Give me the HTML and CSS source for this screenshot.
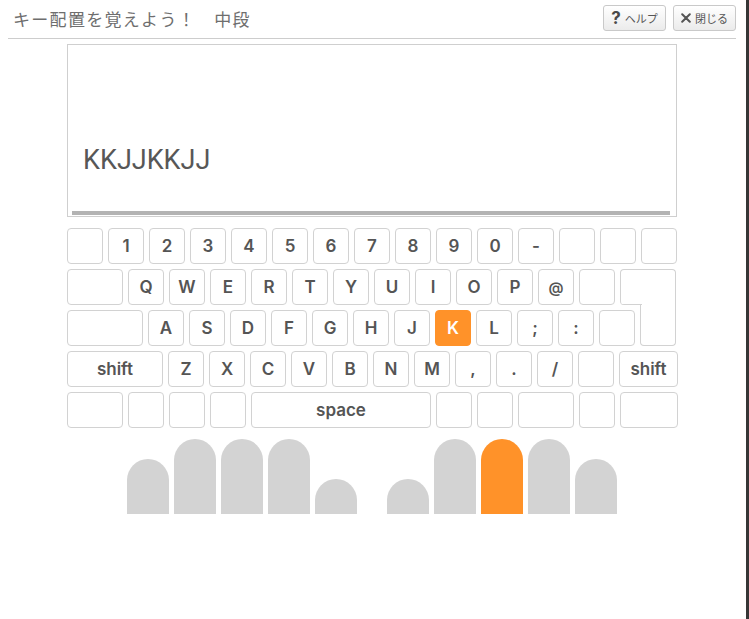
FILE: index.html
```html
<!DOCTYPE html>
<html lang="ja">
<head>
<meta charset="utf-8">
<title>キー配置を覚えよう！ 中段</title>
<link rel="stylesheet" href="styles.css">
</head>
<body>
<div class="dialog">
  <div class="header">
    <h1 class="title">キー配置を覚えよう！　中段</h1>
    <div class="actions">
      <button class="btn"><span class="q">?</span><span class="btn-label">ヘルプ</span></button>
      <button class="btn"><svg class="x" width="10" height="10" viewBox="0 0 10 10"><path d="M1.2 1.2 L8.8 8.8 M8.8 1.2 L1.2 8.8" stroke="#555" stroke-width="2" stroke-linecap="round"/></svg><span class="btn-label">閉じる</span></button>
    </div>
  </div>

  <div class="stage">
    <div class="screen">
      <div class="prompt">KKJJKKJJ</div>
      <div class="progress"></div>
    </div>

    <div class="keyboard">
      <div class="row">
        <div class="key"></div>
        <div class="key">1</div><div class="key">2</div><div class="key">3</div><div class="key">4</div><div class="key">5</div>
        <div class="key">6</div><div class="key">7</div><div class="key">8</div><div class="key">9</div><div class="key">0</div>
        <div class="key">-</div>
        <div class="key"></div><div class="key"></div><div class="key"></div>
      </div>
      <div class="row">
        <div class="key w56"></div>
        <div class="key">Q</div><div class="key">W</div><div class="key">E</div><div class="key">R</div><div class="key">T</div>
        <div class="key">Y</div><div class="key">U</div><div class="key">I</div><div class="key">O</div><div class="key">P</div>
        <div class="key at">@</div>
        <div class="key"></div>
        <div class="key enter-top"></div>
      </div>
      <div class="row">
        <div class="key w76"></div>
        <div class="key">A</div><div class="key">S</div><div class="key">D</div><div class="key">F</div><div class="key">G</div>
        <div class="key">H</div><div class="key">J</div><div class="key active">K</div><div class="key">L</div>
        <div class="key">;</div><div class="key">:</div>
        <div class="key"></div>
        <div class="key enter-bottom"></div>
      </div>
      <div class="row">
        <div class="key w96 word">shift</div>
        <div class="key">Z</div><div class="key">X</div><div class="key">C</div><div class="key">V</div><div class="key">B</div>
        <div class="key">N</div><div class="key">M</div>
        <div class="key">,</div><div class="key">.</div><div class="key">/</div>
        <div class="key"></div>
        <div class="key w59 word">shift</div>
      </div>
      <div class="row">
        <div class="key w56"></div>
        <div class="key"></div><div class="key"></div><div class="key"></div>
        <div class="key w180 word">space</div>
        <div class="key"></div><div class="key"></div>
        <div class="key w56"></div>
        <div class="key"></div>
        <div class="key w58"></div>
      </div>
    </div>

    <div class="hands">
      <div class="hand">
        <div class="finger pinky"></div>
        <div class="finger"></div>
        <div class="finger"></div>
        <div class="finger"></div>
        <div class="finger thumb"></div>
      </div>
      <div class="hand">
        <div class="finger thumb"></div>
        <div class="finger"></div>
        <div class="finger on"></div>
        <div class="finger"></div>
        <div class="finger pinky"></div>
      </div>
    </div>
  </div>
</div>
</body>
</html>
```
FILE: styles.css
```css
html {
  background: #363636;
  margin: 0;
}
body {
  margin: 0;
}
.dialog {
  width: 746px;
  height: 619px;
  box-sizing: border-box;
  background: #fff;
  padding: 0 10px 0 8px;
  font-family: "Liberation Sans", "Noto Sans CJK JP", sans-serif;
}

/* header */
.header {
  height: 38px;
  display: flex;
  justify-content: space-between;
  align-items: flex-start;
  border-bottom: 1px solid #cdcdcd;
}
.title {
  margin: 0;
  padding-left: 5px;
  font-family: "Noto Sans CJK JP", sans-serif;
  font-weight: 400;
  font-size: 17px;
  letter-spacing: 1.3px;
  line-height: 38px;
  color: #6e6e6e;
}
.actions {
  display: flex;
  gap: 7px;
  padding-top: 5px;
}
.btn {
  width: 63px;
  height: 26px;
  box-sizing: border-box;
  border: 1px solid #c9c9c9;
  border-radius: 3px;
  background: linear-gradient(#ffffff, #ebebeb);
  display: flex;
  align-items: center;
  justify-content: center;
  gap: 4px;
  padding: 0;
  color: #555;
  font-family: "Noto Sans CJK JP", sans-serif;
}
.q {
  font-family: Inter, "Liberation Sans", sans-serif;
  font-weight: 700;
  font-size: 17px;
  line-height: 1;
  color: #4a4a4a;
}
.x {
  display: block;
}
.btn-label {
  font-size: 11px;
  line-height: 1;
  color: #555;
}

/* stage */
.stage {
  width: 610px;
  margin: 0 auto;
}
.screen {
  margin-top: 5px;
  height: 173px;
  box-sizing: border-box;
  border: 1px solid #cfcfcf;
  display: flex;
  flex-direction: column;
  justify-content: flex-end;
  padding: 0 6px 1px 4px;
}
.prompt {
  font-family: Roboto, "Liberation Sans", sans-serif;
  font-size: 27px;
  line-height: 32px;
  color: #575757;
  padding-left: 11px;
  margin-bottom: 35px;
}
.progress {
  height: 4px;
  width: 598px;
  background: #b3b3b3;
}

/* keyboard */
.keyboard {
  margin-top: 11px;
  display: flex;
  flex-direction: column;
  gap: 5px;
}
.row {
  display: flex;
  gap: 5px;
}
.key {
  width: 36px;
  height: 36px;
  box-sizing: border-box;
  border: 1px solid #d2d2d2;
  border-radius: 4px;
  background: #fff;
  display: flex;
  align-items: center;
  justify-content: center;
  font-family: Inter, "Liberation Sans", sans-serif;
  font-weight: 600;
  font-size: 17px;
  color: #555;
  flex: none;
}
.key.at {
  font-size: 15px;
}
.w56 { width: 56px; }
.w58 { width: 58px; }
.w59 { width: 59px; }
.w76 { width: 76px; }
.w96 { width: 96px; }
.w180 { width: 180px; }
.key.active {
  background: #ff9229;
  border-color: #ff9229;
  color: #fff;
}
.enter-top {
  width: 56px;
  border-bottom: 0;
  border-radius: 4px 4px 0 4px;
  background: linear-gradient(#d2d2d2, #d2d2d2) no-repeat left bottom / 21px 1px, #fff;
}
.enter-bottom {
  height: 41px;
  margin-top: -5px;
  border-top: 0;
  border-radius: 0 0 4px 4px;
}

/* fingers */
.hands {
  margin-top: 11px;
  display: flex;
  justify-content: center;
  gap: 30px;
}
.hand {
  display: flex;
  align-items: flex-end;
  gap: 5px;
  height: 75px;
}
.finger {
  width: 42px;
  height: 75px;
  border-radius: 21px 21px 0 0;
  background: #d3d3d3;
}
.finger.pinky { height: 55px; }
.finger.thumb { height: 35px; }
.finger.on { background: #ff9229; }
```
